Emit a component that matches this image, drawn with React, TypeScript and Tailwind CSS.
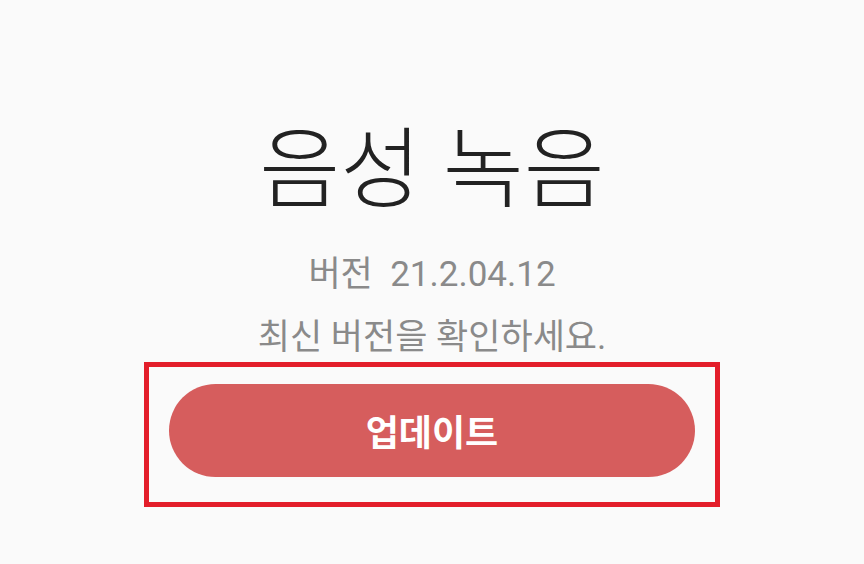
import React from 'react';

export default function App() {
  return (
    <div
      className="w-[864px] h-[564px] bg-[#fafafa] flex flex-col items-center overflow-hidden"
      style={{ fontFamily: 'Roboto, "Noto Sans CJK KR", sans-serif' }}
    >
      {/* Title */}
      <h1 className="mt-[122px] text-[88px] leading-[96px] text-[#222222] font-light">
        음성 녹음
      </h1>

      {/* Version */}
      <p className="mt-[37px] text-[35px] leading-[40px] text-[#8a8a8a]">
        버전&nbsp;&nbsp;21.2.04.12
      </p>
      <p className="mt-[23px] text-[35px] leading-[40px] text-[#8a8a8a]">
        최신 버전을 확인하세요.
      </p>

      {/* Update button, outlined */}
      <div className="mt-[4px] w-[576px] h-[145px] border-[5px] border-[#e31e2a] flex justify-center pt-[17px]">
        <button className="w-[526px] h-[93px] rounded-full bg-[#d65d5d] text-white text-[36px] font-bold pt-[6px]">
          업데이트
        </button>
      </div>
    </div>
  );
}
